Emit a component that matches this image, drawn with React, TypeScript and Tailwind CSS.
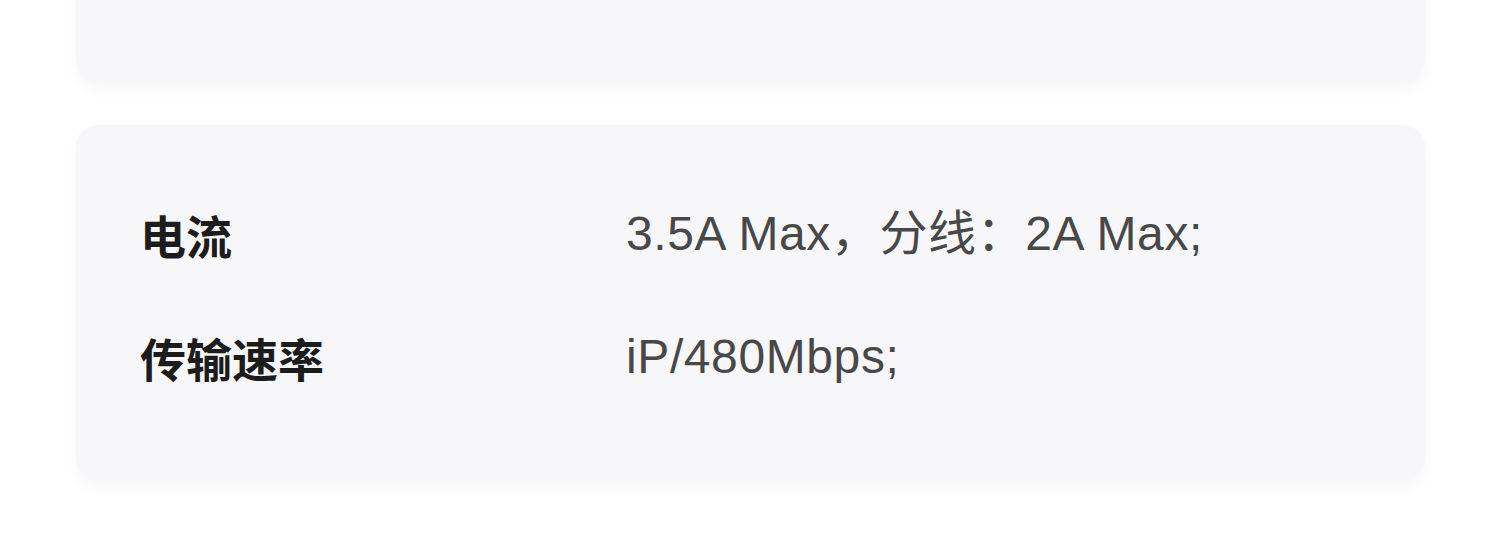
import React from "react";

const rows = [
  { label: "电流", value: "3.5A Max，分线：2A Max;" },
  { label: "传输速率", value: "iP/480Mbps;" },
];

export default function App() {
  return (
    <div
      className="w-[1500px] h-[535px] overflow-hidden bg-white pl-[76px] pr-[75px]"
      style={{ fontFamily: '"Liberation Sans", "Noto Sans CJK SC", sans-serif' }}
    >
      <div className="-mt-[118px] h-[200px] rounded-[22px] bg-[#f7f7f9] shadow-[0_8px_14px_rgba(0,0,0,0.035)]" />
      <div className="mt-[43px] h-[355px] rounded-[22px] bg-[#f7f7f9] shadow-[0_8px_14px_rgba(0,0,0,0.035)] pt-[79px] pl-[64px] flex flex-col gap-[63px]">
        {rows.map((r) => (
          <div key={r.label} className="flex items-center h-[60px]">
            <div
              className="w-[486px] text-[46px] font-bold text-[#1c1c1c] leading-none"
              style={{ fontFamily: '"Noto Sans CJK SC", sans-serif' }}
            >
              {r.label}
            </div>
            <div className="text-[48px] text-[#484848] leading-none tracking-[0.6px]">{r.value}</div>
          </div>
        ))}
      </div>
    </div>
  );
}
